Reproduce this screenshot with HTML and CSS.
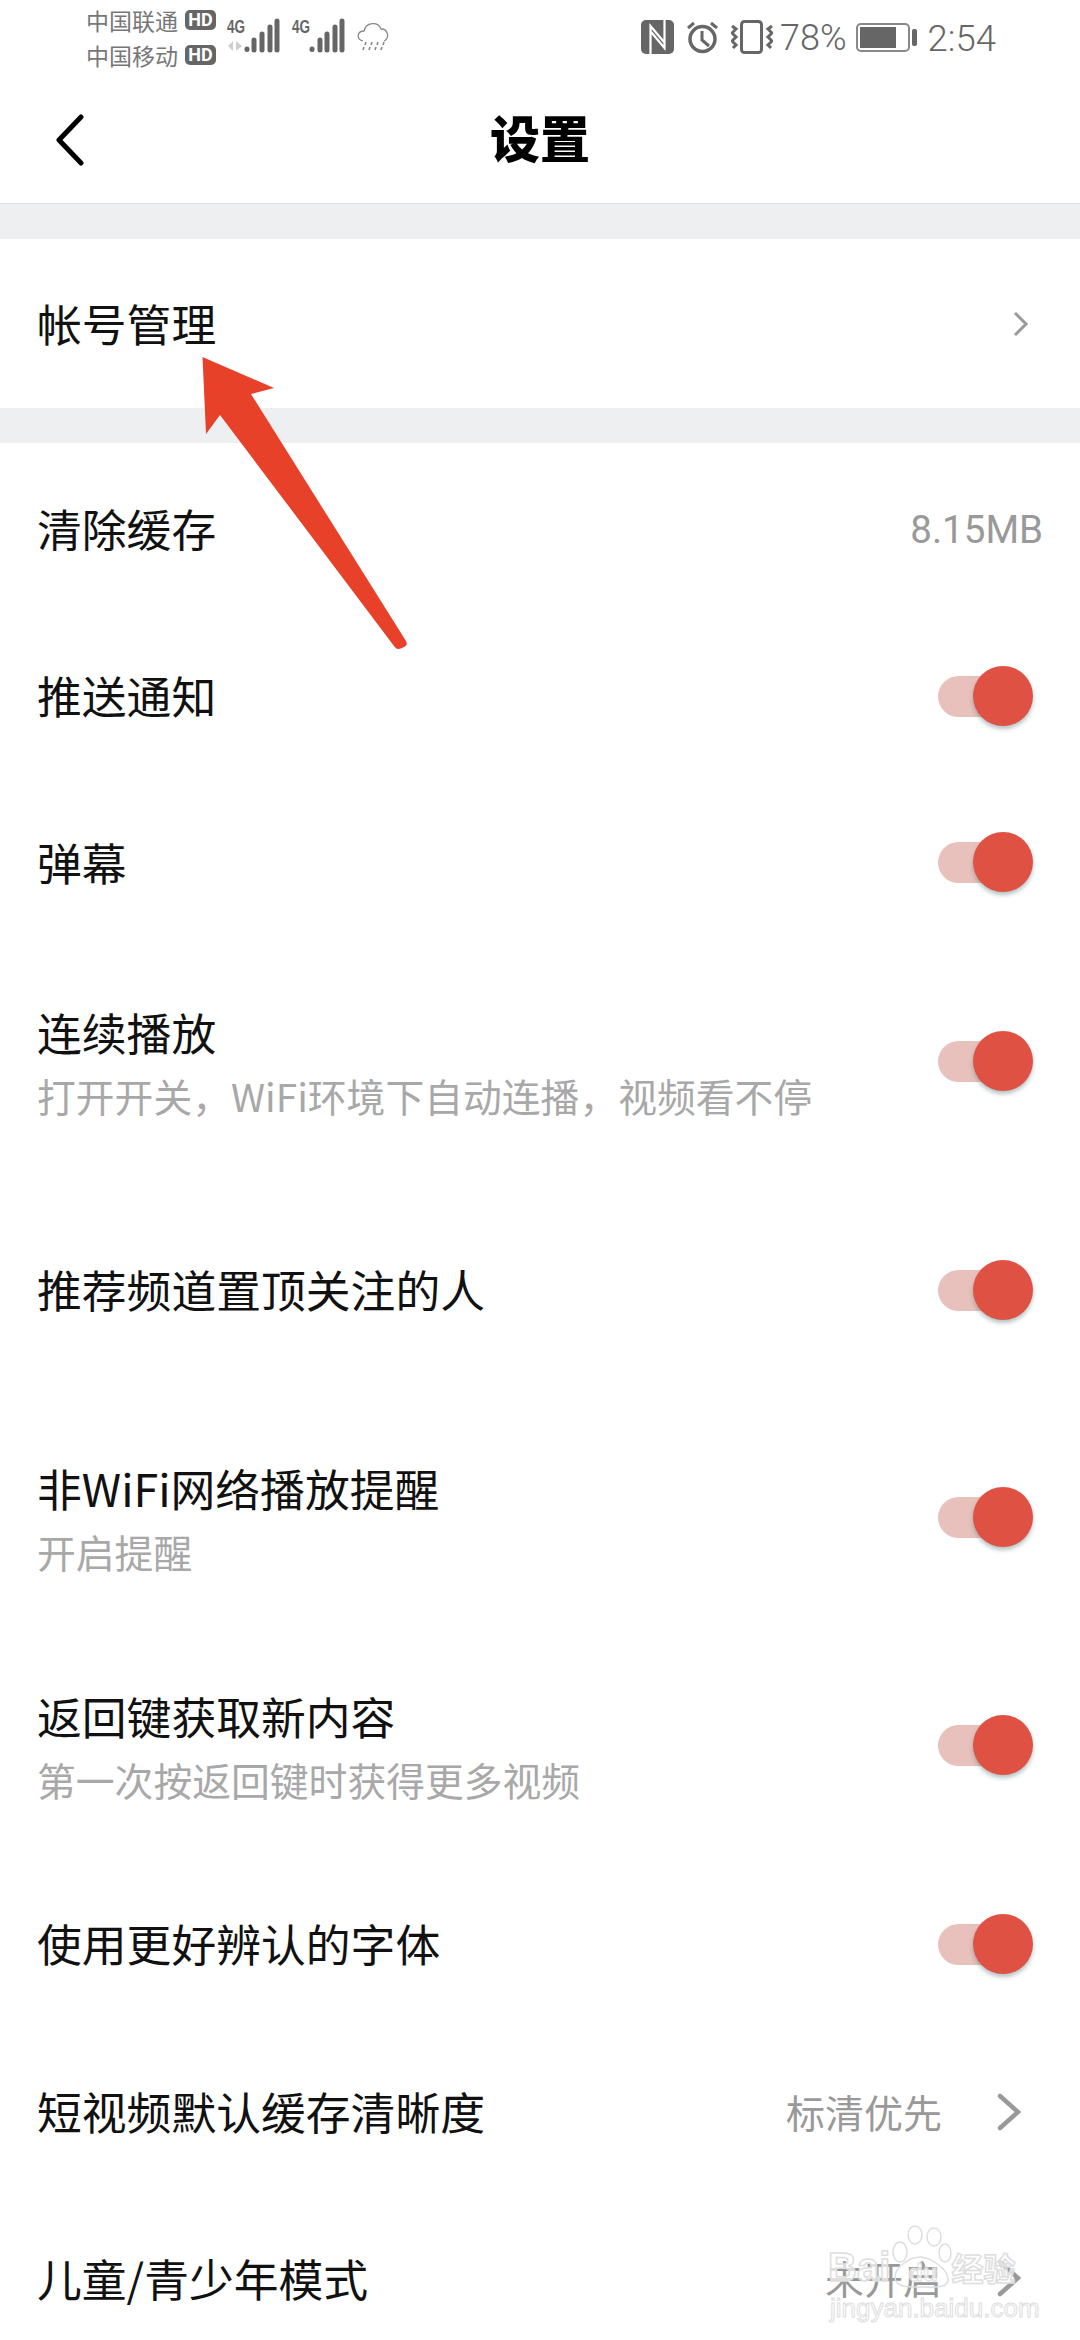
FILE: index.html
```html
<!DOCTYPE html>
<html lang="zh-CN">
<head>
    <meta charset="UTF-8">
    <meta name="viewport" content="width=device-width, initial-scale=1.0">
    <title>设置</title>
    <link rel="stylesheet" href="styles.css">
</head>
<body>
    <div class="phone">
        <div class="status-bar">
            <div class="carriers">
                <div class="carrier"><span>中国联通</span><b class="hd">HD</b></div>
                <div class="carrier"><span>中国移动</span><b class="hd">HD</b></div>
            </div>
            <svg class="signal" width="57" height="40" viewBox="0 0 57 40">
                <text x="1" y="16" class="net" textLength="18" lengthAdjust="spacingAndGlyphs">4G</text>
                <path d="M7 24l-5 5 5 5zM10 24l6 5-6 5z" fill="#cfcfcf"/>
                <path d="M21 32v.5M28 23v10M36 17v16M44 10v23M51 4v29" stroke="#666" stroke-width="5" stroke-linecap="round"/>
            </svg>
            <svg class="signal signal-two" width="56" height="40" viewBox="0 0 56 40">
                <text x="1" y="16" class="net" textLength="18" lengthAdjust="spacingAndGlyphs">4G</text>
                <path d="M21 32v.5M29 23v10M36 17v16M44 10v23M51 4v29" stroke="#666" stroke-width="5" stroke-linecap="round"/>
            </svg>
            <svg class="cloud" width="32" height="30" viewBox="0 0 32 30" fill="none">
                <path d="M6 19C-1 17 0 9 7 9 9 0 21-1 24 7c7 0 9 9 3 12" stroke="#888" stroke-width="1.300"/>
                <path d="M9 20l-1 3M15 20l-1 3M21 20l-1 3M27 20l-1 3M7 25l-1 3M13 25l-1 3M19 25l-1 3M25 25l-1 3" stroke="#888" stroke-width="1.600"/>
            </svg>
            <div class="status-right">
                <svg width="33" height="34" viewBox="0 0 33 34">
                    <rect width="33" height="34" rx="5" fill="#666"/>
                    <path d="M9.500 34V6L23 22M23.500 0V28L10 12" fill="none" stroke="#fff" stroke-width="2.200"/>
                </svg>
                <svg width="33" height="34" viewBox="0 0 33 34" fill="none" stroke="#666">
                    <circle cx="16.500" cy="19" r="12.500" stroke-width="3.500"/>
                    <path d="M16 11v9l7 6" stroke-width="3"/>
                    <path d="M2 8l6-5M31 8l-6-5" stroke-width="3"/>
                </svg>
                <svg width="42" height="34" viewBox="0 0 42 34" fill="none" stroke="#666">
                    <rect x="10.500" y="1.500" width="20" height="31" rx="3" stroke-width="3"/>
                    <path d="M1 6l4 3-4 4 4 4-4 4 4 4-3 3M41 6l-4 3 4 4-4 4 4 4-4 4 3 3" stroke-width="3"/>
                </svg>
                <span class="percent">78%</span>
                <div class="battery"><div class="battery-fill"></div></div>
                <div class="battery-cap"></div>
                <span class="clock">2:54</span>
            </div>
        </div>

        <header class="nav">
            <svg class="back" width="30" height="52" viewBox="0 0 30 52" fill="none">
                <path d="M26 3L4 26l22 23" stroke="#000" stroke-width="5" stroke-linecap="round" stroke-linejoin="round"/>
            </svg>
            <h1>设置</h1>
        </header>

        <div class="gap"></div>
        <div class="row row-account">
            <span class="title">帐号管理</span>
            <svg class="chevron-small" width="16" height="26" viewBox="0 0 16 26" fill="none">
                <path d="M2 2l11 11L2 24" stroke="#999" stroke-width="3"/>
            </svg>
        </div>
        <div class="gap"></div>

        <div class="row row-cache">
            <span class="title">清除缓存</span>
            <span class="size">8.15MB</span>
        </div>
        <div class="row row-push">
            <span class="title">推送通知</span>
            <div class="toggle"></div>
        </div>
        <div class="row row-danmu">
            <span class="title">弹幕</span>
            <div class="toggle"></div>
        </div>
        <div class="row row-sub row-autoplay">
            <div class="text">
                <div class="title">连续播放</div>
                <div class="sub">打开开关，WiFi环境下自动连播，视频看不停</div>
            </div>
            <div class="toggle"></div>
        </div>
        <div class="row row-follow">
            <span class="title">推荐频道置顶关注的人</span>
            <div class="toggle"></div>
        </div>
        <div class="row row-sub row-wifi">
            <div class="text">
                <div class="title">非WiFi网络播放提醒</div>
                <div class="sub">开启提醒</div>
            </div>
            <div class="toggle"></div>
        </div>
        <div class="row row-sub row-backkey">
            <div class="text">
                <div class="title">返回键获取新内容</div>
                <div class="sub">第一次按返回键时获得更多视频</div>
            </div>
            <div class="toggle"></div>
        </div>
        <div class="row row-font">
            <span class="title">使用更好辨认的字体</span>
            <div class="toggle"></div>
        </div>
        <div class="row row-quality">
            <span class="title">短视频默认缓存清晰度</span>
            <div class="option">
                <span class="value">标清优先</span>
                <svg class="chevron" width="24" height="38" viewBox="0 0 24 38" fill="none">
                    <path d="M3 3l18 16L3 35" stroke="#999" stroke-width="4.500" stroke-linecap="round"/>
                </svg>
            </div>
        </div>
        <div class="row row-kids">
            <span class="title">儿童/青少年模式</span>
            <div class="option">
                <span class="value">未开启</span>
                <svg class="chevron" width="24" height="38" viewBox="0 0 24 38" fill="none">
                    <path d="M3 3l18 16L3 35" stroke="#999" stroke-width="4.500" stroke-linecap="round"/>
                </svg>
            </div>
        </div>

        <!-- red arrow drawn over the screenshot -->
        <svg class="arrow" width="240" height="320" viewBox="0 0 240 320">
            <path d="M12.500 7L84 38 61 44 216 291C218 295 216 296 212 298 208 300 206 299 204 296L30 65 16 84z" fill="#e8412a"/>
        </svg>

        <!-- baidu watermark -->
        <div class="watermark">
            <svg class="paw" width="60" height="66" viewBox="0 0 60 66" fill="none" stroke="#dedede" stroke-width="1.500">
                <ellipse cx="8" cy="27" rx="7" ry="10"/>
                <ellipse cx="23" cy="10" rx="7" ry="9"/>
                <ellipse cx="42" cy="12" rx="7" ry="9"/>
                <ellipse cx="53" cy="28" rx="6" ry="9"/>
                <path d="M3 52c0-10 15-20 25-20s28 12 28 22c0 10-14 8-28 8S3 62 3 52z"/>
            </svg>
            <div class="mark-logo"><span class="mark-bai">Bai</span><span class="mark-du">du</span><span class="mark-jy">经验</span></div>
            <div class="mark-url">jingyan.baidu.com</div>
        </div>
    </div>
</body>
</html>
```

FILE: styles.css
```css
body {
    margin: 0;
    background-color: #ffffff;
    font-family: "Noto Sans CJK SC", Roboto, sans-serif;
    color: #111111;
}
.phone {
    position: relative;
    width: 1080px;
    height: 2340px;
    overflow: hidden;
}

/* status bar */
.status-bar {
    height: 74px;
    display: flex;
    align-items: center;
    padding-left: 86px;
    color: #666666;
}
.carriers {
    display: flex;
    flex-direction: column;
    gap: 6px;
}
.carrier {
    display: flex;
    align-items: center;
    gap: 7px;
    height: 29px;
    font-size: 23px;
    color: #777777;
}
.hd {
    width: 31px;
    height: 20px;
    border-radius: 5px;
    background-color: #666666;
    color: #ffffff;
    font-family: Roboto, sans-serif;
    font-size: 18px;
    font-weight: 700;
    line-height: 20px;
    text-align: center;
}
.signal {
    margin-left: 10px;
}
.signal-two {
    margin-left: 8px;
}
.net {
    font-family: "Liberation Sans", sans-serif;
    font-size: 18px;
    font-weight: 700;
    fill: #666666;
}
.cloud {
    margin-left: 10px;
    margin-top: -1px;
}
.status-right {
    display: flex;
    align-items: center;
    margin-left: 252px;
    gap: 12px;
}
.percent,
.clock {
    font-family: Roboto, sans-serif;
    font-size: 36px;
    font-weight: 300;
    color: #666666;
    padding-top: 2px;
}
.percent {
    margin-left: -5px;
}
.clock {
    margin-left: -1px;
    font-size: 36.500px;
}
.battery {
    width: 54px;
    height: 29px;
    box-sizing: border-box;
    border: 2px solid #888888;
    border-radius: 5px;
    padding: 2px;
    margin-left: -3px;
}
.battery-fill {
    width: 36px;
    height: 100%;
    background-color: #666666;
}
.battery-cap {
    width: 5px;
    height: 17px;
    margin-left: -10px;
    border-radius: 2px;
    background-color: #666666;
}

/* nav */
.nav {
    height: 129px;
    position: relative;
    display: flex;
    align-items: center;
    justify-content: center;
    border-bottom: 1px solid #e0e0e0;
}
.nav h1 {
    margin: 0;
    padding-bottom: 6px;
    font-size: 50px;
    font-weight: 900;
    color: #000000;
}
.back {
    position: absolute;
    left: 55px;
    top: 40px;
}

.gap {
    height: 35px;
    background-color: #eeeff1;
}

/* rows */
.row {
    display: flex;
    align-items: center;
    justify-content: space-between;
    padding: 0 37px;
    box-sizing: border-box;
}
.title {
    font-size: 44.800px;
    line-height: 60px;
    color: #111111;
}
.row > .title {
    padding-bottom: 2px;
}
.row-danmu > .title,
.row-kids > .title {
    padding-bottom: 0;
}
.text {
    margin-bottom: 6px;
}
.sub {
    font-size: 38.800px;
    line-height: 66px;
    color: #a8a8a8;
}
.size {
    font-family: Roboto, sans-serif;
    font-size: 38.500px;
    color: #999999;
}
.value {
    font-size: 39px;
    padding-bottom: 3px;
    color: #999999;
}
.option {
    display: flex;
    align-items: center;
    gap: 55px;
    margin-right: 22px;
}
.chevron-small {
    margin-right: 14px;
}
.row-account { height: 169px; }
.row-cache { height: 172px; }
.row-push { height: 162px; }
.row-danmu { height: 170px; }
.row-autoplay { height: 242px; }
.row-follow { height: 201px; }
.row-wifi { height: 267px; }
.row-backkey { height: 189px; }
.row-font { height: 195px; }
.row-quality { height: 142px; }
.row-kids { height: 190px; }

/* switch */
.toggle {
    position: relative;
    width: 96px;
    height: 60px;
    margin-right: 10px;
}
.toggle::before {
    content: "";
    position: absolute;
    left: 1px;
    top: 10px;
    width: 82px;
    height: 41px;
    border-radius: 21px;
    background-color: #e8c0bc;
}
.toggle::after {
    content: "";
    position: absolute;
    right: 0;
    top: 0;
    width: 60px;
    height: 60px;
    border-radius: 50%;
    background-color: #df5143;
    box-shadow: 0 3px 4px rgba(90, 120, 120, 0.45);
}
.row-sub .toggle {
    margin-top: -14px;
}

/* annotation */
.arrow {
    position: absolute;
    left: 190px;
    top: 350px;
}
.watermark {
    position: absolute;
    left: 828px;
    top: 2224px;
    width: 200px;
    height: 100px;
    color: rgba(255, 255, 255, 0.7);
    -webkit-text-stroke: 1.500px #dedede;
}
.paw {
    position: absolute;
    left: 64px;
    top: 1px;
}
.mark-logo {
    position: absolute;
    left: 0;
    top: 20px;
    display: flex;
    align-items: baseline;
    font-family: "Liberation Sans", sans-serif;
    font-size: 40px;
    font-weight: 700;
    line-height: 46px;
}
.mark-du {
    margin-left: 18px;
    font-size: 24px;
    -webkit-text-stroke: 1px #dedede;
}
.mark-jy {
    margin-left: 14px;
    font-size: 32px;
    font-family: "Noto Sans CJK SC", sans-serif;
}
.mark-url {
    position: absolute;
    left: 2px;
    top: 68px;
    font-family: "Liberation Sans", sans-serif;
    font-size: 26px;
    line-height: 32px;
    -webkit-text-stroke: 1px #dedede;
}
```
